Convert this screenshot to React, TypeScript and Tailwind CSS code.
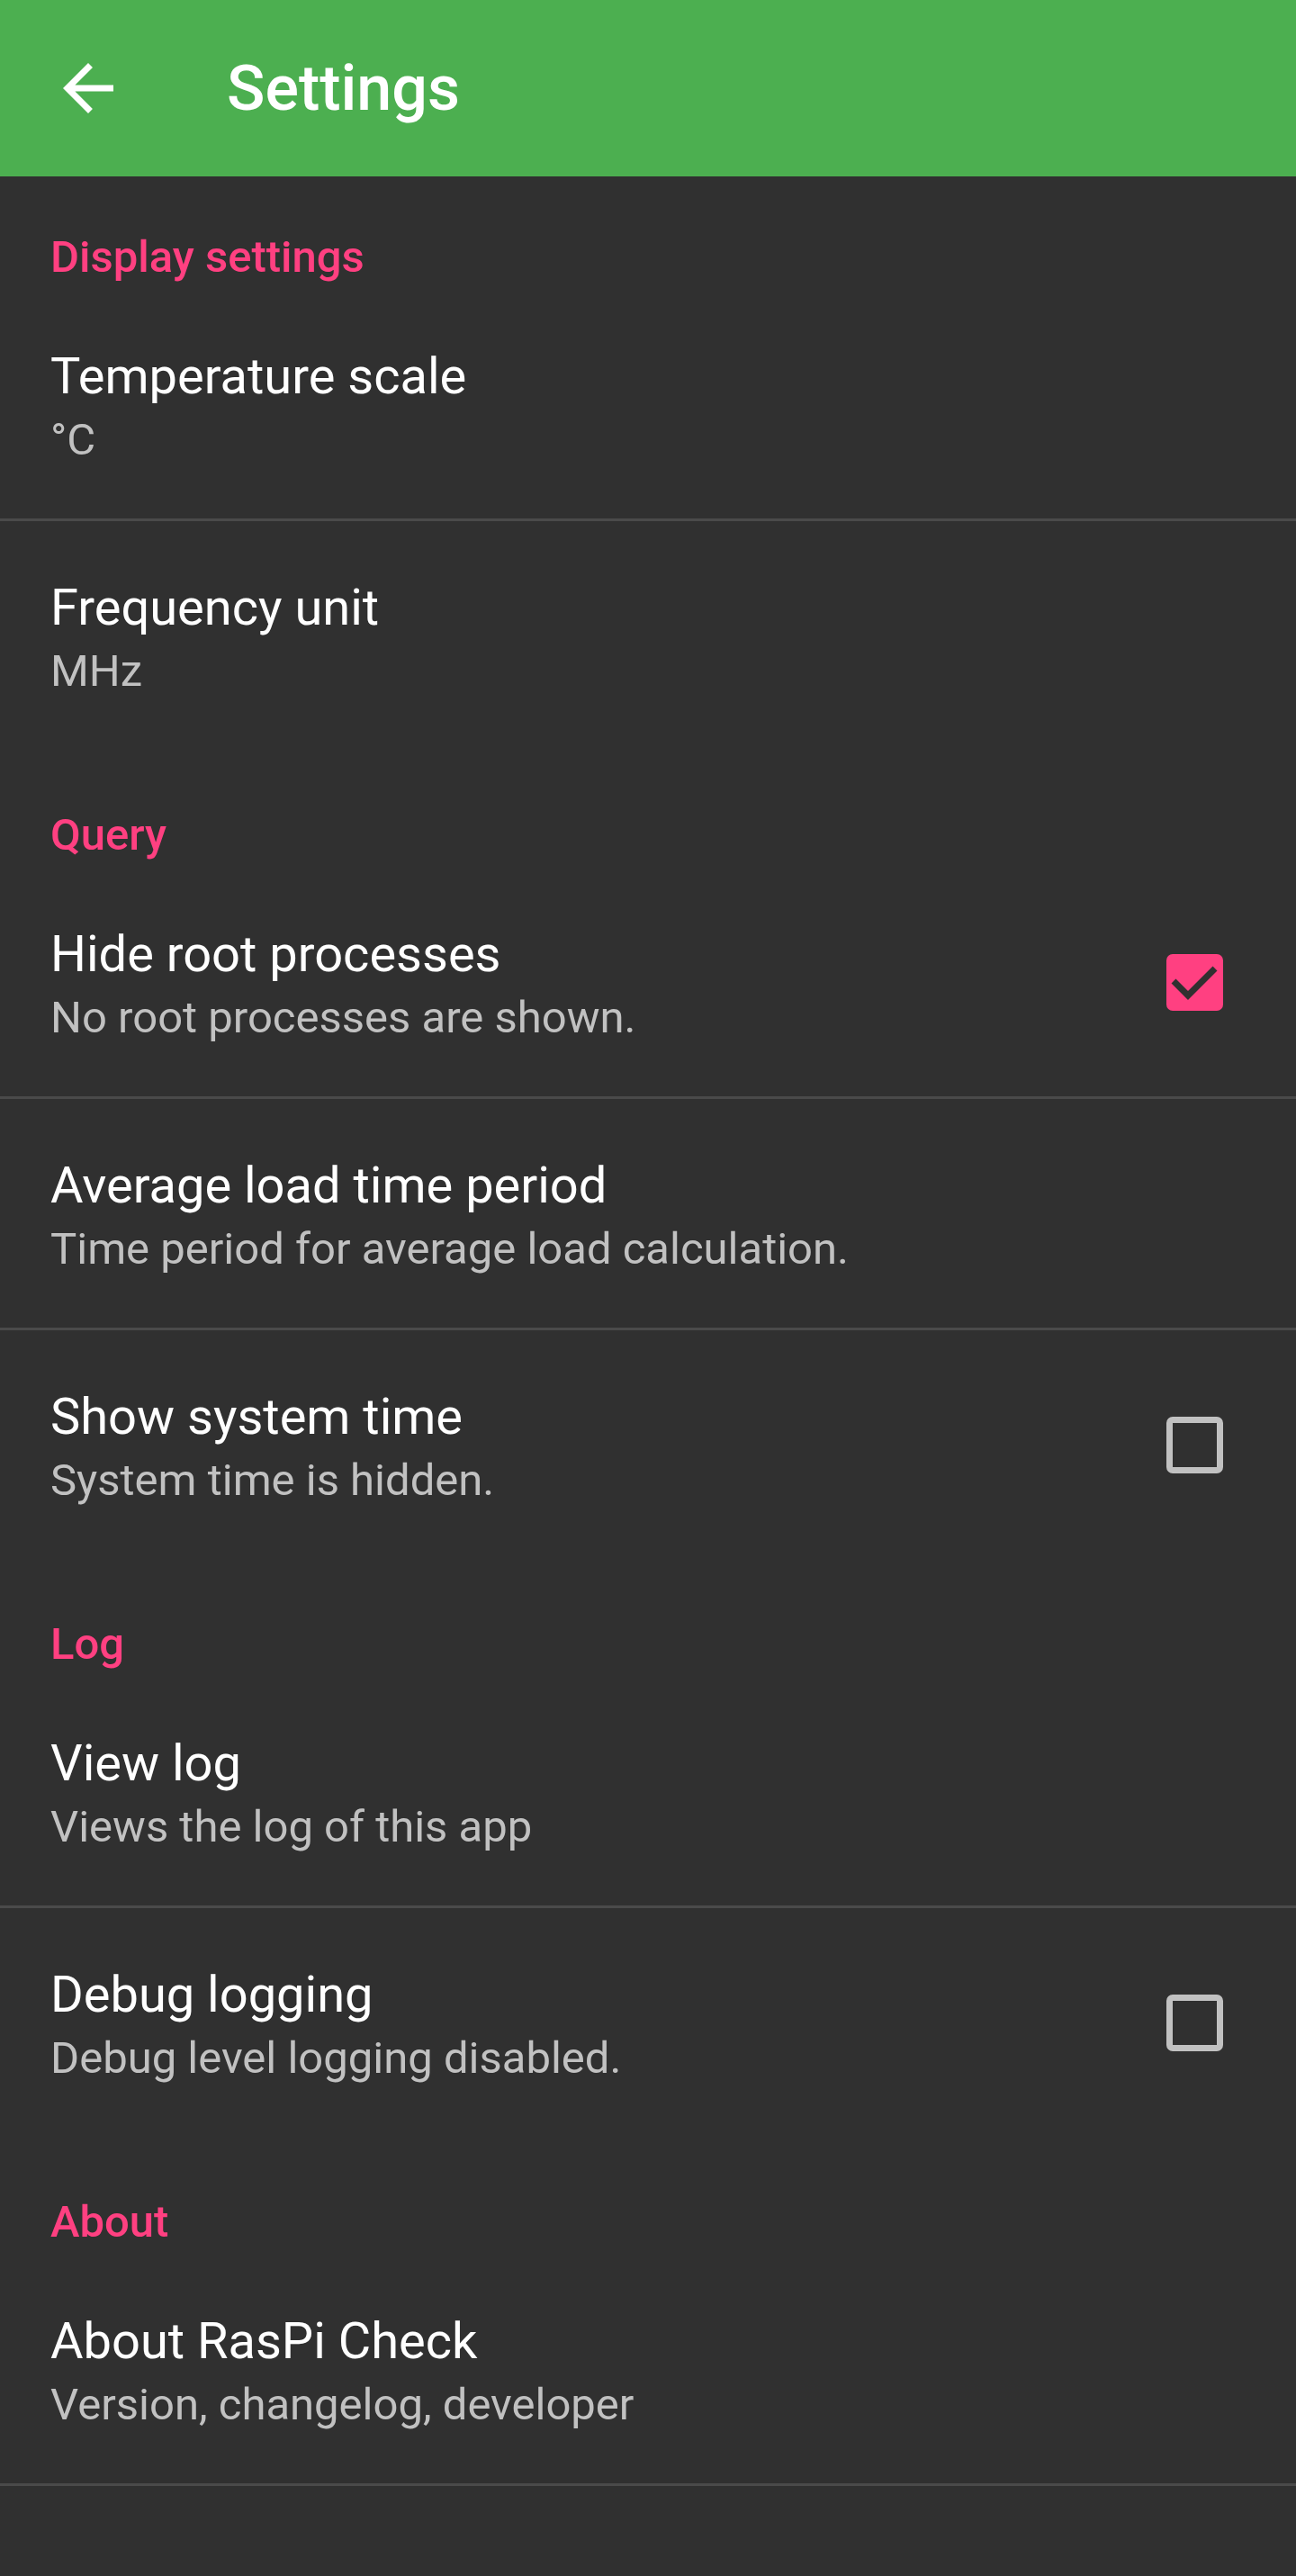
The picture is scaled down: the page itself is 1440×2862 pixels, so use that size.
import React from 'react';

type Pref = {
  title: string;
  summary: string;
  checkbox?: 'on' | 'off';
  divider?: boolean;
};

type Category = {
  name: string;
  items: Pref[];
};

const categories: Category[] = [
  {
    name: 'Display settings',
    items: [
      { title: 'Temperature scale', summary: '°C', divider: true },
      { title: 'Frequency unit', summary: 'MHz' },
    ],
  },
  {
    name: 'Query',
    items: [
      { title: 'Hide root processes', summary: 'No root processes are shown.', checkbox: 'on', divider: true },
      { title: 'Average load time period', summary: 'Time period for average load calculation.', divider: true },
      { title: 'Show system time', summary: 'System time is hidden.', checkbox: 'off' },
    ],
  },
  {
    name: 'Log',
    items: [
      { title: 'View log', summary: 'Views the log of this app', divider: true },
      { title: 'Debug logging', summary: 'Debug level logging disabled.', checkbox: 'off' },
    ],
  },
  {
    name: 'About',
    items: [{ title: 'About RasPi Check', summary: 'Version, changelog, developer', divider: true }],
  },
];

const CheckBox: React.FC<{ checked: boolean }> = ({ checked }) => {
  if (checked) {
    return (
      <svg width="63" height="63" viewBox="0 0 63 63">
        <rect x="0" y="0" width="63" height="63" rx="7" fill="#ff4081" />
        <polyline points="8,30 24,46 54,16" fill="none" stroke="#303030" strokeWidth="7" />
      </svg>
    );
  }
  return <div className="w-[63px] h-[63px] rounded-[7px] border-[7px] border-[#c1c1c1]" />;
};

const PrefRow: React.FC<{ pref: Pref }> = ({ pref }) => (
  <>
    <div className="flex items-center h-[254px] pl-[56px] pr-[81px]">
      <div className="flex-1 pt-[60px] pb-[52px]">
        <div className="text-[56px] leading-[72px] text-white">{pref.title}</div>
        <div className="text-[49px] leading-[70px] text-[#c1c1c1]">{pref.summary}</div>
      </div>
      {pref.checkbox && <CheckBox checked={pref.checkbox === 'on'} />}
    </div>
    {pref.divider && <div className="h-[3px] bg-[#4a4a4a]" />}
  </>
);

export default function App() {
  return (
    <div className="min-h-[2862px] w-[1440px] bg-[#303030] font-['Roboto','Noto_Sans',sans-serif]">
      <header className="flex items-center h-[196px] bg-[#4caf50] pl-[56px]">
        <svg width="84" height="84" viewBox="0 0 24 24" fill="#ffffff">
          <path d="M20 11H7.83l5.59-5.59L12 4l-8 8 8 8 1.41-1.41L7.83 13H20v-2z" />
        </svg>
        <h1 className="ml-[112px] text-[70px] leading-[84px] font-medium text-white">Settings</h1>
      </header>

      {categories.map((cat, i) => (
        <section key={cat.name}>
          <div className={`${i === 0 ? 'pt-[66px]' : 'pt-[71px]'} pb-[12px] pl-[56px]`}>
            <div className="text-[49px] leading-[48px] font-medium text-[#ff4081]">{cat.name}</div>
          </div>
          {cat.items.map((p) => (
            <PrefRow key={p.title} pref={p} />
          ))}
        </section>
      ))}
    </div>
  );
}
